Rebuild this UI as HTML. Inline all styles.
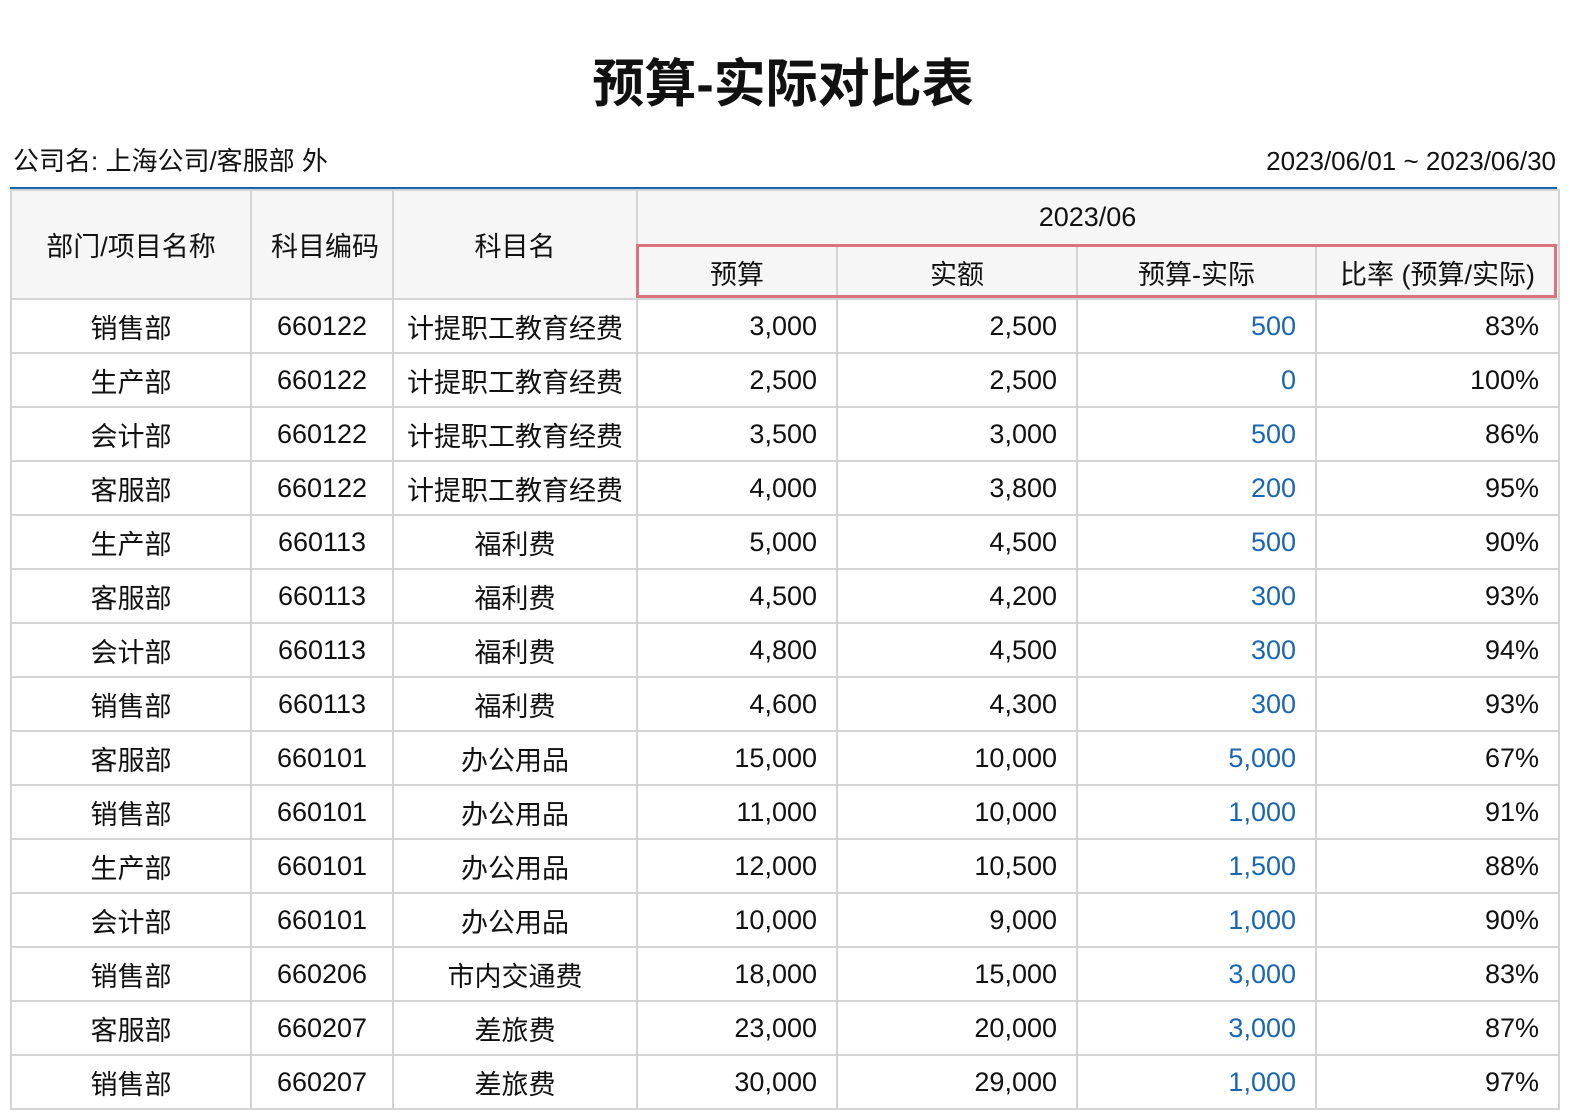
<!DOCTYPE html>
<html><head><meta charset="utf-8"><style>
body{margin:0;width:1570px;height:1120px;background:#fff;position:relative;font-family:"Liberation Sans","Noto Sans CJK SC",sans-serif;color:#111;overflow:hidden}
.title{position:absolute;left:0;width:1566px;top:50px;text-align:center;font-size:52px;font-weight:bold;line-height:70px}
.co{position:absolute;left:13px;top:143px;font-size:26px;line-height:36px}
.dt{position:absolute;right:14px;top:143px;font-size:26px;line-height:36px}
.bl{position:absolute;left:10px;width:1547px;top:187px;height:2px;background:#1565b0}
table{position:absolute;left:10px;top:189px;border-collapse:collapse;table-layout:fixed;width:1548px}
td,th{border:2px solid #d4d4d4;font-size:27px;font-weight:normal;padding:0 19px;height:52px;white-space:nowrap}
th{background:#f6f6f6;text-align:center}
td{text-align:center}
td.n{text-align:right}
td.b{color:#1a66b3;text-align:right}
.red{position:absolute;left:636px;top:244px;width:915px;height:48px;border:3px solid #d9747c}
</style></head><body>
<div class="title">预算-实际对比表</div>
<div class="co">公司名: 上海公司/客服部 外</div>
<div class="dt">2023/06/01 ~ 2023/06/30</div>
<div class="bl"></div>
<table>
<colgroup><col style="width:240px"><col style="width:142px"><col style="width:244px"><col style="width:200px"><col style="width:240px"><col style="width:239px"><col style="width:243px"></colgroup>
<tr><th rowspan="2" style="height:105px">部门/项目名称</th><th rowspan="2">科目编码</th><th rowspan="2">科目名</th><th colspan="4" style="height:53px;padding-right:40px">2023/06</th></tr>
<tr><th style="height:50px">预算</th><th>实额</th><th>预算-实际</th><th style="padding:0">比率 (预算/实际)</th></tr>
<tr><td>销售部</td><td>660122</td><td style="padding:0">计提职工教育经费</td><td class="n">3,000</td><td class="n">2,500</td><td class="b">500</td><td class="n">83%</td></tr>
<tr><td>生产部</td><td>660122</td><td style="padding:0">计提职工教育经费</td><td class="n">2,500</td><td class="n">2,500</td><td class="b">0</td><td class="n">100%</td></tr>
<tr><td>会计部</td><td>660122</td><td style="padding:0">计提职工教育经费</td><td class="n">3,500</td><td class="n">3,000</td><td class="b">500</td><td class="n">86%</td></tr>
<tr><td>客服部</td><td>660122</td><td style="padding:0">计提职工教育经费</td><td class="n">4,000</td><td class="n">3,800</td><td class="b">200</td><td class="n">95%</td></tr>
<tr><td>生产部</td><td>660113</td><td>福利费</td><td class="n">5,000</td><td class="n">4,500</td><td class="b">500</td><td class="n">90%</td></tr>
<tr><td>客服部</td><td>660113</td><td>福利费</td><td class="n">4,500</td><td class="n">4,200</td><td class="b">300</td><td class="n">93%</td></tr>
<tr><td>会计部</td><td>660113</td><td>福利费</td><td class="n">4,800</td><td class="n">4,500</td><td class="b">300</td><td class="n">94%</td></tr>
<tr><td>销售部</td><td>660113</td><td>福利费</td><td class="n">4,600</td><td class="n">4,300</td><td class="b">300</td><td class="n">93%</td></tr>
<tr><td>客服部</td><td>660101</td><td>办公用品</td><td class="n">15,000</td><td class="n">10,000</td><td class="b">5,000</td><td class="n">67%</td></tr>
<tr><td>销售部</td><td>660101</td><td>办公用品</td><td class="n">11,000</td><td class="n">10,000</td><td class="b">1,000</td><td class="n">91%</td></tr>
<tr><td>生产部</td><td>660101</td><td>办公用品</td><td class="n">12,000</td><td class="n">10,500</td><td class="b">1,500</td><td class="n">88%</td></tr>
<tr><td>会计部</td><td>660101</td><td>办公用品</td><td class="n">10,000</td><td class="n">9,000</td><td class="b">1,000</td><td class="n">90%</td></tr>
<tr><td>销售部</td><td>660206</td><td>市内交通费</td><td class="n">18,000</td><td class="n">15,000</td><td class="b">3,000</td><td class="n">83%</td></tr>
<tr><td>客服部</td><td>660207</td><td>差旅费</td><td class="n">23,000</td><td class="n">20,000</td><td class="b">3,000</td><td class="n">87%</td></tr>
<tr><td>销售部</td><td>660207</td><td>差旅费</td><td class="n">30,000</td><td class="n">29,000</td><td class="b">1,000</td><td class="n">97%</td></tr>
</table>
<div class="red"></div>
</body></html>
